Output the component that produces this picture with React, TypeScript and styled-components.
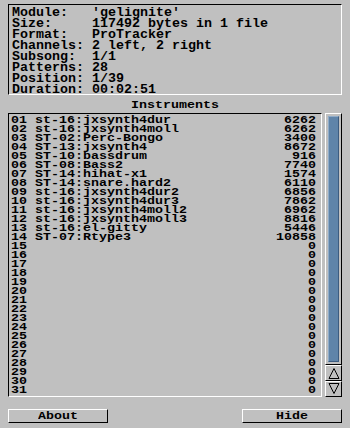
import styled, { createGlobalStyle } from "styled-components";

const GlobalStyle = createGlobalStyle`
  html, body {
    margin: 0;
    padding: 0;
    background: #c0c0c0;
  }
  body {
    font-family: "Liberation Mono", "DejaVu Sans Mono", monospace;
    color: #000;
  }
`;

const info = [
  ["Module:", "'gelignite'"],
  ["Size:", "117492 bytes in 1 file"],
  ["Format:", "ProTracker"],
  ["Channels:", "2 left, 2 right"],
  ["Subsong:", "1/1"],
  ["Patterns:", "28"],
  ["Position:", "1/39"],
  ["Duration:", "00:02:51"],
];

const named: [string, number][] = [
  ["st-16:jxsynth4dur", 6262],
  ["st-16:jxsynth4moll", 6262],
  ["ST-02:Perc-Bongo", 3400],
  ["ST-13:jxsynth4", 8672],
  ["ST-10:bassdrum", 916],
  ["ST-08:Bass2", 7740],
  ["ST-14:hihat-x1", 1574],
  ["ST-14:snare.hard2", 6110],
  ["st-16:jxsynth4dur2", 6856],
  ["st-16:jxsynth4dur3", 7862],
  ["st-16:jxsynth4moll2", 6962],
  ["st-16:jxsynth4moll3", 8816],
  ["st-16:el-gitty", 5446],
  ["ST-07:Rtype3", 10858],
];

const instruments = Array.from({ length: 31 }, (_, i) => {
  const n = named[i];
  return {
    idx: String(i + 1).padStart(2, "0"),
    name: n ? n[0] : "",
    size: n ? n[1] : 0,
  };
});

const App = () => {
  return (
    <>
      <GlobalStyle />
      <Window>
        <InfoBox>
          {info.map(([label, value]) => (
            <InfoLine key={label}>
              <InfoText>{label.padEnd(10, " ") + value}</InfoText>
            </InfoLine>
          ))}
        </InfoBox>

        <Heading>
          <Squash>Instruments</Squash>
        </Heading>

        <ListArea>
          <List>
            {instruments.map((ins) => (
              <Row key={ins.idx}>
                <Squash>{`${ins.idx} ${ins.name}`}</Squash>
                <Squash>{ins.size}</Squash>
              </Row>
            ))}
          </List>
          <Scroller>
            <Track>
              <Knob />
            </Track>
            <Arrow>
              <svg width="12" height="12" viewBox="0 0 12 12">
                <polyline
                  points="1,11.5 6,1.5 11,11.5 1,11.5"
                  fill="none"
                  stroke="#000"
                  strokeWidth="1"
                />
              </svg>
            </Arrow>
            <Arrow>
              <svg width="12" height="12" viewBox="0 0 12 12">
                <polyline
                  points="1,0.5 11,0.5 6,10.5 1,0.5"
                  fill="none"
                  stroke="#000"
                  strokeWidth="1"
                />
              </svg>
            </Arrow>
          </Scroller>
        </ListArea>

        <Buttons>
          <Button>
            <Squash>About</Squash>
          </Button>
          <Button>
            <Squash>Hide</Squash>
          </Button>
        </Buttons>
      </Window>
    </>
  );
};

export default App;

const Window = styled.div`
  width: 350px;
  height: 428px;
  box-sizing: border-box;
  padding: 4px 8px 0 8px;
  display: flex;
  flex-direction: column;
  background: #c0c0c0;
`;

const InfoBox = styled.div`
  height: 91px;
  box-sizing: border-box;
  padding: 2px 3px 0 3px;
  border-top: 1px solid #000;
  border-left: 1px solid #000;
  border-right: 1px solid #fff;
  border-bottom: 1px solid #fff;
`;

const InfoLine = styled.div`
  display: flex;
  align-items: center;
  height: 11px;
`;

const InfoText = styled.span`
  display: inline-block;
  font-size: 13.33px;
  line-height: 11px;
  font-weight: bold;
  white-space: pre;
  transform: scaleY(0.9);
`;

const Squash = styled.span`
  display: inline-block;
  font-size: 13.33px;
  line-height: 9px;
  font-weight: bold;
  white-space: pre;
  transform: scaleY(0.75);
`;

const Heading = styled.div`
  height: 18px;
  display: flex;
  align-items: center;
  justify-content: center;
  padding-top: 3px;
  box-sizing: border-box;
`;

const ListArea = styled.div`
  display: flex;
  gap: 3px;
  height: 284px;
`;

const List = styled.div`
  flex: 1;
  box-sizing: border-box;
  padding: 2px 5px 0 2px;
  border-top: 1px solid #000;
  border-left: 1px solid #000;
  border-right: 1px solid #fff;
  border-bottom: 1px solid #fff;
`;

const Row = styled.div`
  display: flex;
  justify-content: space-between;
  align-items: center;
  height: 9px;
`;

const Scroller = styled.div`
  width: 17px;
  display: flex;
  flex-direction: column;
`;

const Track = styled.div`
  flex: 1;
  box-sizing: border-box;
  padding: 2px;
  border-top: 1px solid #fff;
  border-left: 1px solid #fff;
  border-right: 1px solid #000;
  border-bottom: 1px solid #000;
  display: flex;
`;

const Knob = styled.div`
  flex: 1;
  background: #5f84a9;
  border-top: 1px solid #8fabc8;
  border-left: 1px solid #8fabc8;
  border-right: 1px solid #3c5c80;
  border-bottom: 1px solid #3c5c80;
`;

const Arrow = styled.div`
  height: 16px;
  box-sizing: border-box;
  border-top: 1px solid #fff;
  border-left: 1px solid #fff;
  border-right: 1px solid #000;
  border-bottom: 1px solid #000;
  display: flex;
  align-items: center;
  justify-content: center;
`;

const Buttons = styled.div`
  display: flex;
  justify-content: space-between;
  margin-top: 12px;
`;

const Button = styled.div`
  width: 100px;
  height: 14px;
  box-sizing: border-box;
  border-top: 1px solid #fff;
  border-left: 1px solid #fff;
  border-right: 1px solid #000;
  border-bottom: 1px solid #000;
  display: flex;
  align-items: center;
  justify-content: center;
`;
